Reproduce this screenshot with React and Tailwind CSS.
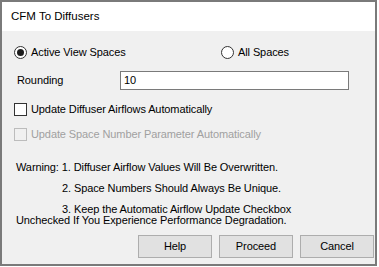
import React from "react";

const Radio = ({ checked }) => (
  <span className="w-[13px] h-[13px] rounded-full border border-[#333333] bg-white flex items-center justify-center shrink-0">
    {checked && <span className="w-[7px] h-[7px] rounded-full bg-[#1e1e1e]" />}
  </span>
);

const Check = ({ disabled }) => (
  <span
    className={
      disabled
        ? "w-[13px] h-[13px] border border-[#bcbcbc] bg-[#f0f0f0] shrink-0"
        : "w-[13px] h-[13px] border border-[#333333] bg-white shrink-0"
    }
  />
);

const Button = ({ children }) => (
  <button className="w-[74px] h-[23px] border border-[#adadad] bg-[#e1e1e1] text-[11px] text-black leading-none">
    {children}
  </button>
);

export default function App() {
  const [scope, setScope] = React.useState("active");

  return (
    <div className="w-[379px] h-[267px] bg-white font-['Liberation_Sans',Arial,sans-serif] text-[11px] tracking-[-0.1px] text-black">
      <div className="w-[377px] h-[266px] border-2 border-[#7a7a7a] bg-[#f0f0f0] flex flex-col">

        {/* TITLE */}
        <div className="h-[29px] bg-white flex items-center pl-[9px] pt-[1px] shrink-0">
          <span className="text-[11.5px] leading-none tracking-normal">CFM To Diffusers</span>
        </div>

        {/* SCOPE */}
        <div className="mt-[15px] h-[13px] flex items-center">
          <label className="ml-[12px] w-[207px] flex items-center gap-[4px]" onClick={() => setScope("active")}>
            <Radio checked={scope === "active"} />
            <span className="leading-none">Active View Spaces</span>
          </label>
          <label className="flex items-center gap-[4px]" onClick={() => setScope("all")}>
            <Radio checked={scope === "all"} />
            <span className="leading-none">All Spaces</span>
          </label>
        </div>

        {/* ROUNDING */}
        <div className="mt-[12px] h-[19px] flex items-center">
          <span className="ml-[15px] w-[103px] leading-none">Rounding</span>
          <div className="w-[229px] h-[19px] border border-[#7a7a7a] bg-white flex items-center pl-[3px]">
            <span className="leading-none">10</span>
          </div>
        </div>

        {/* OPTIONS */}
        <div className="mt-[13px] h-[13px] flex items-center gap-[4px] ml-[12px]">
          <Check />
          <span className="leading-none">Update Diffuser Airflows Automatically</span>
        </div>
        <div className="mt-[12px] h-[13px] flex items-center gap-[4px] ml-[12px]">
          <Check disabled />
          <span className="leading-none text-[#a0a0a0]">Update Space Number Parameter Automatically</span>
        </div>

        {/* WARNING */}
        <div className="mt-[20px] ml-[14px] leading-[12px]">Warning: 1. Diffuser Airflow Values Will Be Overwritten.</div>
        <div className="mt-[9px] ml-[60px] leading-[12px]">2. Space Numbers Should Always Be Unique.</div>
        <div className="mt-[10px] leading-[11px]">
          <div className="ml-[60px]">3. Keep the Automatic Airflow Update Checkbox</div>
          <div className="ml-[14px]">Unchecked If You Experience Performance Degradation.</div>
        </div>

        {/* BUTTONS */}
        <div className="mt-[9px] ml-[136px] flex gap-[7px]">
          <Button>Help</Button>
          <Button>Proceed</Button>
          <Button>Cancel</Button>
        </div>
      </div>
    </div>
  );
}
